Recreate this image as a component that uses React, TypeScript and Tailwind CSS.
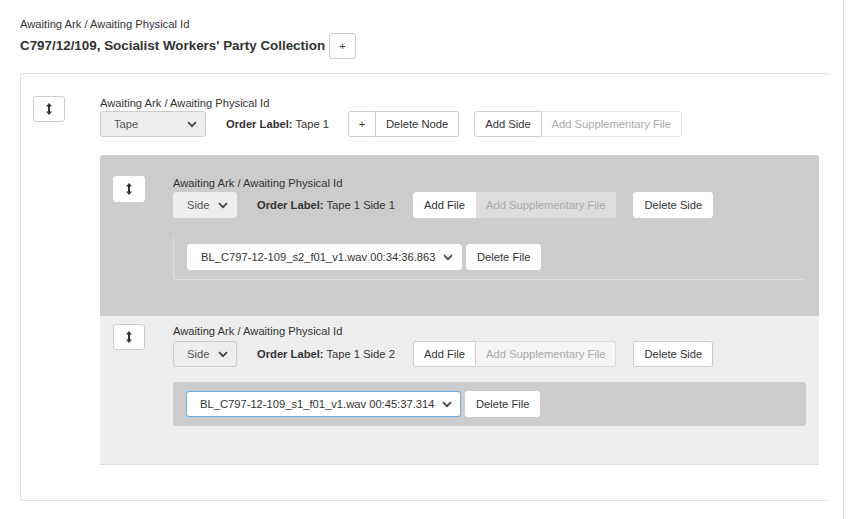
import React from 'react';

function DragIcon() {
  return (
    <svg width="6" height="12" viewBox="0 0 6 12" className="block">
      <polygon points="3,0 6,3.5 4,3.5 4,8.5 6,8.5 3,12 0,8.5 2,8.5 2,3.5 0,3.5" fill="#333" />
    </svg>
  );
}

function Chevron() {
  return (
    <svg width="10" height="7" viewBox="0 0 10 7" className="block">
      <path d="M1 1.2 L5 5.2 L9 1.2" fill="none" stroke="#444" strokeWidth="1.8" />
    </svg>
  );
}

function DragButton({ white }: { white?: boolean }) {
  return (
    <div
      className={
        'flex h-[26px] w-[32px] items-center justify-center rounded-[3px] bg-white ' +
        (white ? 'border border-white' : 'border border-[#ccc]')
      }
    >
      <DragIcon />
    </div>
  );
}

function FakeSelect({ label, className }: { label: string; className: string }) {
  return (
    <div
      className={
        'flex h-[26px] items-center justify-between whitespace-nowrap rounded-[3px] border pl-[13px] pr-[8px] ' +
        className
      }
    >
      <span>{label}</span>
      <Chevron />
    </div>
  );
}

function Btn({ children, className = '' }: { children: React.ReactNode; className?: string }) {
  return (
    <div className={'flex h-[26px] items-center border px-[10px] whitespace-nowrap ' + className}>{children}</div>
  );
}

function SidePanel({
  bg,
  side,
  file,
  top,
  rowPt,
  boxMt,
  focused,
}: {
  bg: string;
  side: string;
  file: string;
  top: string;
  rowPt: string;
  boxMt: string;
  focused?: boolean;
}) {
  const dark = !focused;
  return (
    <div className={'flex pl-[13px] pr-[13px] ' + bg + ' ' + top}>
      <div className="w-[60px] shrink-0">
        <DragButton white={dark} />
      </div>
      <div className="flex-1">
        <div className="h-[14px] leading-[14px]">Awaiting Ark / Awaiting Physical Id</div>
        <div className={'flex items-center ' + rowPt}>
          <FakeSelect
            label="Side"
            className={
              'w-[64px] text-[#555] ' + (dark ? 'border-[#eee] bg-[#eee]' : 'border-[#ccc] bg-[#eee]')
            }
          />
          <div className="ml-[20px] w-[156px]">
            <span className="font-bold">Order Label:</span> {side}
          </div>
          <div className="flex">
            <Btn className={'rounded-l-[3px] bg-white ' + (dark ? 'border-white' : 'border-[#ccc]')}>Add File</Btn>
            <Btn
              className={
                'rounded-r-[3px] border-l-0 text-[#aaa] ' +
                (dark ? 'border-[#ddd] bg-[#ddd]' : 'border-[#ddd] bg-[#f5f5f5]')
              }
            >
              Add Supplementary File
            </Btn>
          </div>
          <Btn className={'ml-[17px] rounded-[3px] bg-white ' + (dark ? 'border-white' : 'border-[#ccc]')}>
            Delete Side
          </Btn>
        </div>
        <div
          className={
            'rounded-[3px] pl-[13px] pt-[9px] pb-[9px] ' +
            boxMt +
            ' ' +
            (dark ? 'border-l border-b border-[#ddd]' : 'bg-[#ccc]')
          }
        >
          <div className="flex items-center">
            <FakeSelect
              label={file}
              className={'w-[275px] bg-white ' + (focused ? 'border-[#66afe9]' : 'border-white')}
            />
            <Btn className="ml-[4px] rounded-[3px] border-white bg-white">Delete File</Btn>
          </div>
        </div>
      </div>
    </div>
  );
}

export default function App() {
  return (
    <div
      className="min-h-[519px] w-[844px] border-r border-[#ddd] bg-white pt-[17px] pl-[20px] text-[11.2px] text-[#333]"
      style={{ fontFamily: '"Liberation Sans", Arial, sans-serif' }}
    >
      <div className="h-[14px] leading-[14px]">Awaiting Ark / Awaiting Physical Id</div>
      <div className="mt-[2px] flex items-center">
        <span className="text-[13.4px] font-bold">C797/12/109, Socialist Workers' Party Collection</span>
        <div className="ml-[4px] flex h-[26px] w-[27px] items-center justify-center rounded-[3px] border border-[#ccc]">
          +
        </div>
      </div>

      <div className="mt-[14px] flex h-[428px] w-[810px] rounded-[3px] border-t border-l border-b border-[#e3e3e3] pt-[22px] pl-[12px]">
        <div className="w-[67px] shrink-0">
          <DragButton />
        </div>
        <div className="w-[719px]">
          <div className="h-[14px] leading-[14px]">Awaiting Ark / Awaiting Physical Id</div>
          <div className="flex items-center pt-[1px]">
            <FakeSelect label="Tape" className="w-[106px] border-[#ccc] bg-[#eee] text-[#555]" />
            <div className="ml-[20px] w-[122px]">
              <span className="font-bold">Order Label:</span> Tape 1
            </div>
            <div className="flex">
              <Btn className="w-[28px] justify-center rounded-l-[3px] border-[#ccc] px-0">+</Btn>
              <Btn className="rounded-r-[3px] border-l-0 border-[#ccc]">Delete Node</Btn>
            </div>
            <div className="ml-[15px] flex">
              <Btn className="rounded-l-[3px] border-[#ccc]">Add Side</Btn>
              <Btn className="rounded-r-[3px] border-l-0 border-[#e5e5e5] text-[#aaa]">Add Supplementary File</Btn>
            </div>
          </div>

          <div className="mt-[18px] overflow-hidden rounded-t-[3px] border-b border-[#ddd]">
            <SidePanel
              bg="bg-[#ccc] h-[161px]"
              top="pt-[21px]"
              rowPt="pt-[2px]"
              boxMt="mt-[17px]"
              side="Tape 1 Side 1"
              file="BL_C797-12-109_s2_f01_v1.wav 00:34:36.863"
            />
            <SidePanel
              bg="bg-[#eee] h-[148px]"
              top="pt-[8px]"
              rowPt="pt-[3px]"
              boxMt="mt-[15px]"
              side="Tape 1 Side 2"
              file="BL_C797-12-109_s1_f01_v1.wav 00:45:37.314"
              focused
            />
          </div>
        </div>
      </div>
    </div>
  );
}
